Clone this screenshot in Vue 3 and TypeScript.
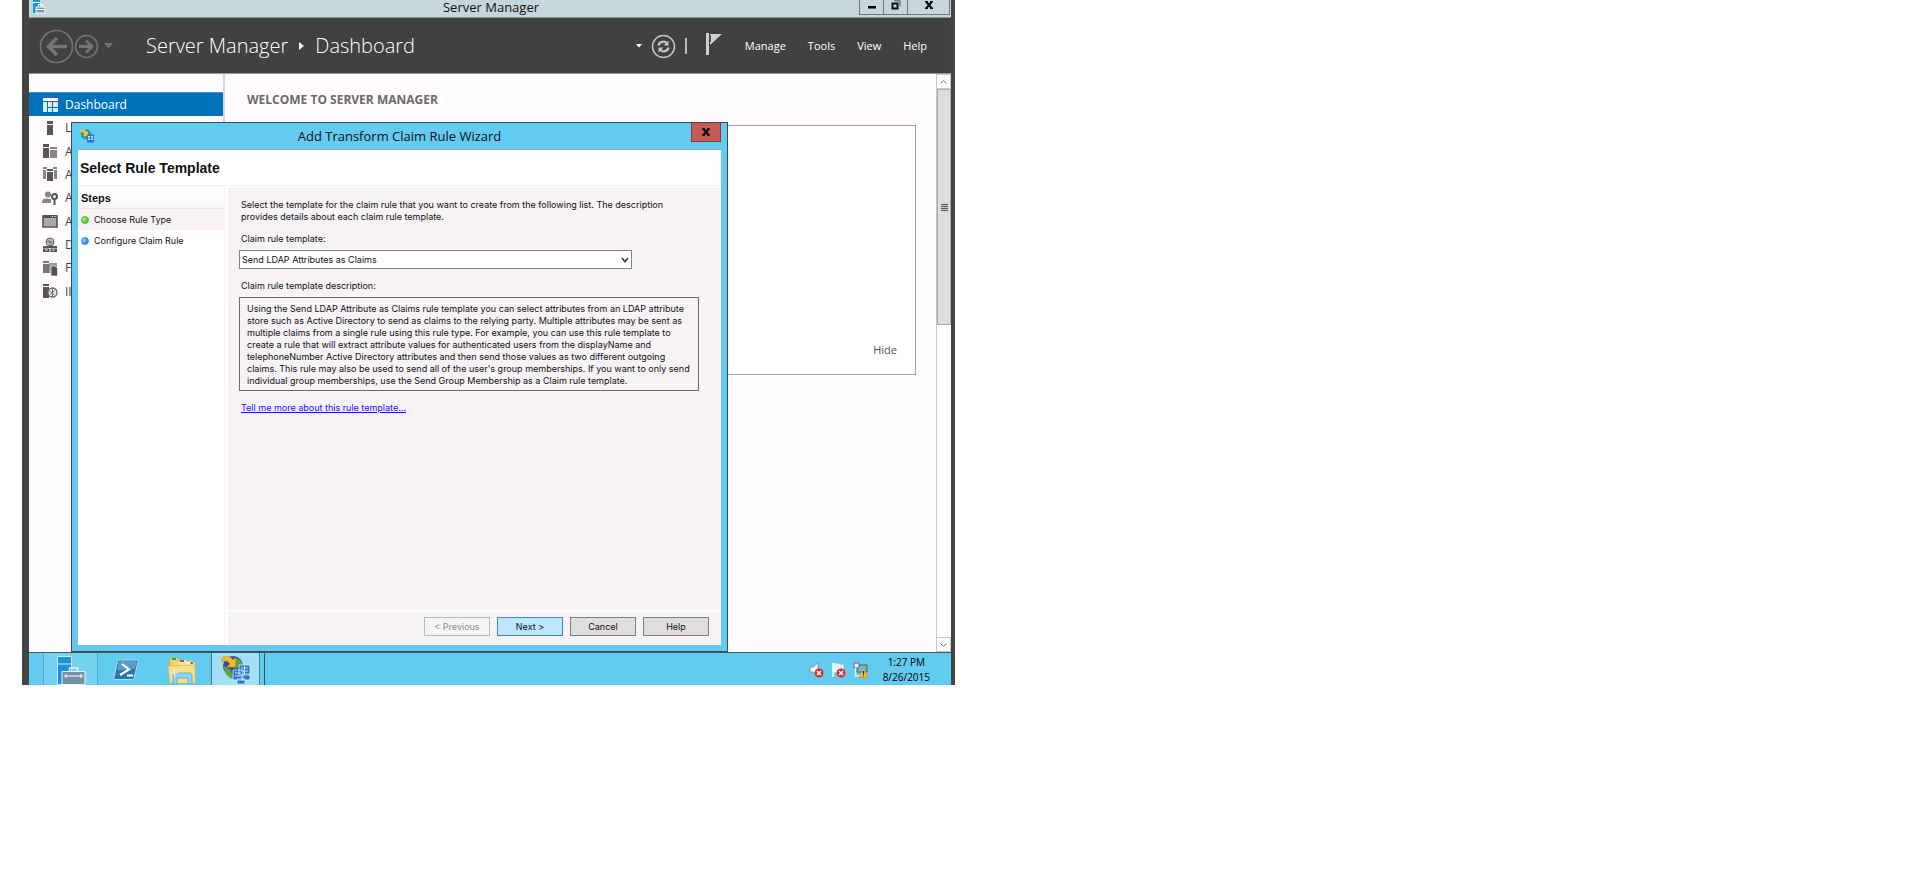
<script setup lang="ts">
import { ref } from 'vue'

interface Template {
  name: string
  description: string[]
}

const menus = ['Manage', 'Tools', 'View', 'Help']

const servers = [
  { icon: 'local', label: 'L' },
  { icon: 'all', label: 'A' },
  { icon: 'ad', label: 'A' },
  { icon: 'key', label: 'A' },
  { icon: 'app', label: 'A' },
  { icon: 'dns', label: 'D' },
  { icon: 'file', label: 'F' },
  { icon: 'iis', label: 'II' },
]

const steps = [
  { label: 'Choose Rule Type', state: 'current' },
  { label: 'Configure Claim Rule', state: 'pending' },
]

const templates: Template[] = [
  {
    name: 'Send LDAP Attributes as Claims',
    description: [
      'Using the Send LDAP Attribute as Claims rule template you can select attributes from an LDAP attribute',
      'store such as Active Directory to send as claims to the relying party. Multiple attributes may be sent as',
      'multiple claims from a single rule using this rule type. For example, you can use this rule template to',
      'create a rule that will extract attribute values for authenticated users from the displayName and',
      'telephoneNumber Active Directory attributes and then send those values as two different outgoing',
      "claims. This rule may also be used to send all of the user's group memberships. If you want to only send",
      'individual group memberships, use the Send Group Membership as a Claim rule template.',
    ],
  },
]

const selected = ref<Template>(templates[0])
</script>

<template>
  <div class="desktop">
    <header class="titlebar">
      <svg class="titlebar-icon" width="14" height="14" viewBox="0 0 14 14">
        <path d="M1 0h7v13H1z" fill="#1e8fdd" />
        <path d="M1 2.5h7" stroke="#fff" />
        <path d="M4 7h9v6H4z" fill="#7d98a8" stroke="#fff" />
        <path d="M6.500 6.500v-2h4v2M4 9.500h9" fill="none" stroke="#fff" />
      </svg>
      <h1>Server Manager</h1>
      <div class="window-buttons">
        <button type="button" aria-label="Minimize">
          <svg width="10" height="10" viewBox="0 0 10 10"><path d="M1 6h8v2.500H1z" /></svg>
        </button>
        <button type="button" aria-label="Restore">
          <svg width="10" height="10" viewBox="0 0 10 10"><path d="M1.500 3.500h5v5h-5z" fill="none" stroke="#111" stroke-width="2" /><path d="M3 .800h6v5.500" fill="none" stroke="#555" /></svg>
        </button>
        <button type="button" class="wide" aria-label="Close">
          <svg width="10" height="10" viewBox="0 0 10 10"><path d="M2 1.500l6 7M8 1.500l-6 7" stroke="#111" stroke-width="2.200" /><path d="M1 1.500h3M6 1.500h3M1 8.500h3M6 8.500h3" stroke="#111" /></svg>
        </button>
      </div>
    </header>

    <nav class="navbar" aria-label="Server Manager">
      <button type="button" class="icon-button" aria-label="Back">
        <svg width="35" height="35" viewBox="0 0 35 35" fill="none" stroke="#747474">
          <circle cx="17.500" cy="17.500" r="16" stroke-width="1.600" />
          <path d="M9 17.500h19M18 9l-8.500 8.500L18 26" stroke-width="3.600" />
        </svg>
      </button>
      <button type="button" class="icon-button" aria-label="Forward">
        <svg width="25" height="25" viewBox="0 0 25 25" fill="none" stroke="#747474">
          <circle cx="12.500" cy="12.500" r="11" stroke-width="1.600" />
          <path d="M5 12.500h13M12 6.500l6 6-6 6" stroke-width="3" />
        </svg>
      </button>
      <button type="button" class="icon-button history" aria-label="History">
        <svg width="9" height="6" viewBox="0 0 9 6"><path d="M0 0h9L4.500 5.500z" fill="#747474" /></svg>
      </button>
      <div class="crumbs">
        <span>Server Manager</span>
        <svg width="5" height="8" viewBox="0 0 5 8"><path d="M0 0l5 4-5 4z" fill="#fff" /></svg>
        <span>Dashboard</span>
      </div>
      <div class="nav-tools">
        <button type="button" class="icon-button" aria-label="More">
          <svg width="6" height="4" viewBox="0 0 6 4"><path d="M0 0h6L3 3.500z" fill="#fff" /></svg>
        </button>
        <button type="button" class="icon-button" aria-label="Refresh">
          <svg width="25" height="25" viewBox="0 0 25 25" fill="none" stroke="#c4c4c4">
            <circle cx="12.500" cy="12.500" r="11" stroke-width="1.500" />
            <path d="M7.500 11.500c.5-4 6.500-5 8.500-2M17.500 13.500c-.5 4-6.500 5-8.500 2" stroke-width="2.200" />
            <path d="M17.500 6.500v5h-5zM7.500 18.500v-5h5z" fill="#c4c4c4" stroke="none" />
          </svg>
        </button>
        <span class="separator"></span>
        <button type="button" class="icon-button flag" aria-label="Notifications">
          <svg width="16" height="22" viewBox="0 0 16 22"><path d="M0 0h3v22H0z" fill="#cfcfcf" /><path d="M4 1h12L4 12z" fill="#cfcfcf" /><path d="M4.500 2v7" stroke="#555" /></svg>
        </button>
      </div>
      <ul class="menus">
        <li v-for="menu in menus" :key="menu"><button type="button">{{ menu }}</button></li>
      </ul>
    </nav>

    <div class="workspace">
      <div class="console">
        <aside class="sidebar">
          <a class="side-current" href="#dashboard">
            <svg width="15" height="14" viewBox="0 0 15 14" fill="#d8ecfa"><path d="M0 0h15v3H0z" fill="#fff" /><path d="M0 4h4v10H0zM5 4h4v5H5zM10 4h5v5h-5zM5 10h4v4H5zM10 10h5v4h-5z" /></svg>
            Dashboard
          </a>
          <ul class="side-list">
            <li v-for="item in servers" :key="item.icon">
              <a :href="'#' + item.icon">
                <svg width="16" height="16" viewBox="0 0 16 16" fill="#555">
                  <template v-if="item.icon === 'local'">
                    <path d="M5 1h6v3H5zM5 5h6v10H5z" />
                  </template>
                  <template v-else-if="item.icon === 'all'">
                    <path d="M1 1h6v3H1zM1 5h6v10H1z" /><path d="M8 4h7v2H8zM8 7h7v8H8z" fill="#858585" />
                  </template>
                  <template v-else-if="item.icon === 'ad'">
                    <path d="M5 3h6v2H5zM5 6h6v9H5z" /><path d="M1 1h4v2H1zM11 1h4v2h-4zM1 4h3v9H1zM12 4h3v9h-3z" fill="#858585" />
                  </template>
                  <template v-else-if="item.icon === 'key'">
                    <circle cx="6" cy="4.500" r="3" fill="#858585" /><path d="M0 13c0-5 3-5 9-4v4z" fill="#858585" />
                    <circle cx="12.500" cy="6.500" r="2.500" fill="none" stroke="#555" stroke-width="2" /><path d="M11.500 8h2v7h-2z" />
                  </template>
                  <template v-else-if="item.icon === 'app'">
                    <path d="M1 3h14v11H1z" fill="#aaa" stroke="#555" stroke-width="1.600" /><path d="M1 2h14v3H1z" /><path d="M10 3.500h1M12.500 3.500h1" stroke="#fff" />
                  </template>
                  <template v-else-if="item.icon === 'dns'">
                    <circle cx="8" cy="5" r="4" fill="#ccc" stroke="#666" /><path d="M4 5h8M8 1v8M5 2.500l6 5" stroke="#777" fill="none" />
                    <path d="M1 9h14v2H1zM1 11.500h6.500V15H1zM8.500 11.500H15V15H8.500z" /><path d="M3 13h3M10 13h3" stroke="#ddd" />
                  </template>
                  <template v-else-if="item.icon === 'file'">
                    <path d="M1 1h6v2H1zM1 4h6v9H1z" fill="#777" /><path d="M7 3h8v10H7z" fill="#999" /><path d="M9 6h4l2.500 2.500V16H9z" stroke="#fff" stroke-width=".600" />
                  </template>
                  <template v-else>
                    <path d="M1 1h6v2H1zM1 4h6v11H1z" /><circle cx="10.500" cy="9.500" r="4.500" fill="#eee" stroke="#666" stroke-width="1.300" /><path d="M7.500 8l5 4M8 11.500l5-4M10.500 6v7" stroke="#777" />
                  </template>
                </svg>
                {{ item.label }}
              </a>
            </li>
          </ul>
        </aside>
        <main class="dashboard">
          <h2>WELCOME TO SERVER MANAGER</h2>
          <section class="welcome"><a href="#hide">Hide</a></section>
        </main>
        <div class="scrollbar">
          <span class="scroll-arrow"><svg width="7" height="4" viewBox="0 0 7 4"><path d="M.5 3.500l3-3 3 3" /></svg></span>
          <span class="scroll-thumb"><i></i></span>
          <span class="scroll-arrow end"><svg width="7" height="4" viewBox="0 0 7 4"><path d="M.5 .500l3 3 3-3" /></svg></span>
        </div>
      </div>

      <section class="dialog" role="dialog" aria-labelledby="dialog-title">
        <header class="dialog-titlebar">
          <svg class="dialog-icon" width="15" height="15" viewBox="0 0 30 30">
            <circle cx="12" cy="11" r="10" fill="#2f7fb8" /><path d="M3 6c6-6 14-3 17 4-6 2-6 7-12 9z" fill="#5fa544" />
            <path d="M1 2c6-3 10 0 12 4l3-2v10H6l3-3C7 6 5 5 1 6z" fill="#f8c630" />
            <path d="M14 11h14v16H14z" fill="#2b78d0" /><path d="M16 14h4v3h-4zM22 14h4v3h-4zM16 19h4v3h-4zM22 19h4v3h-4z" fill="#d6efff" />
          </svg>
          <h2 id="dialog-title">Add Transform Claim Rule Wizard</h2>
          <button type="button" class="dialog-close" aria-label="Close">
            <svg width="10" height="10" viewBox="0 0 10 10"><path d="M2 1.500l6 7M8 1.500l-6 7" stroke="#111" stroke-width="2.200" /><path d="M1 1.500h3M6 1.500h3M1 8.500h3M6 8.500h3" stroke="#111" /></svg>
          </button>
        </header>
        <div class="dialog-client">
          <h3>Select Rule Template</h3>
          <div class="dialog-body">
            <div class="steps">
              <h4>Steps</h4>
              <ol>
                <li v-for="step in steps" :key="step.label" :class="step.state"><span class="dot"></span>{{ step.label }}</li>
              </ol>
            </div>
            <form class="page" @submit.prevent>
              <div class="fields">
                <p class="intro">
                  Select the template for the claim rule that you want to create from the following list. The description<br />
                  provides details about each claim rule template.
                </p>
                <label for="rule-template">Claim rule template:</label>
                <div class="select-box">
                  <select id="rule-template" v-model="selected">
                    <option v-for="t in templates" :key="t.name" :value="t">{{ t.name }}</option>
                  </select>
                  <svg width="8" height="6" viewBox="0 0 8 6"><path d="M1 1l3 3.500L7 1" fill="none" stroke="#444" stroke-width="1.800" /></svg>
                </div>
                <p class="caption">Claim rule template description:</p>
                <div class="description">
                  <div v-for="line in selected.description" :key="line">{{ line }}</div>
                </div>
                <a class="more" href="#more">Tell me more about this rule template...</a>
              </div>
              <div class="actions">
                <button type="button" disabled>&lt; Previous</button>
                <button type="submit" class="primary">Next &gt;</button>
                <button type="button">Cancel</button>
                <button type="button">Help</button>
              </div>
            </form>
          </div>
        </div>
      </section>
    </div>

    <footer class="taskbar">
      <button type="button" class="task open" aria-label="Server Manager">
        <svg width="30" height="29" viewBox="0 0 30 29">
          <path d="M1.500.5h14v28h-14z" fill="#1f8fe0" stroke="#c8ebfb" /><path d="M2 8h13" stroke="#c8ebfb" />
          <path d="M6 15.500h23v13H6z" fill="#7592a5" stroke="#e4f3f9" /><path d="M13.500 15v-3h8v3" fill="none" stroke="#dff1f8" stroke-width="1.500" /><path d="M8 20h19M10 18v4M25 18v4" stroke="#fff" />
        </svg>
      </button>
      <button type="button" class="task" aria-label="PowerShell">
        <svg width="26" height="24" viewBox="0 0 26 24">
          <path d="M6 2h18c1 0 1.500.500 1.200 1.500L21 20c-.3 1-1 1.500-2 1.500H2c-1 0-1.500-.5-1.200-1.500L4.500 3.500C4.800 2.500 5 2 6 2z" fill="#2b74ac" stroke="#b8dcf0" /><path d="M6 3h18l-2 8c-7-1-12 2-18 1z" fill="#5b9ccb" />
          <path d="M9 6l7 5.500L7 17M14 17.500h6" fill="none" stroke="#fff" stroke-width="2.200" />
        </svg>
      </button>
      <button type="button" class="task" aria-label="File Explorer">
        <svg width="30" height="27" viewBox="0 0 30 27">
          <path d="M3 1h8l1 3h15l1 6H3z" fill="#f5d36f" stroke="#d8a93c" stroke-width=".800" /><path d="M12 3h7l1 3h8v5H12z" fill="#fbe59a" /><path d="M5 2h4" stroke="#25a54a" stroke-width="2" /><path d="M13 4h4" stroke="#d8452e" stroke-width="2" /><path d="M20 6h6" stroke="#fff" stroke-width="2.500" /><path d="M23 6h3" stroke="#3a92d4" stroke-width="2" />
          <path d="M1 9l27-1v18H3z" fill="#f8df8c" stroke="#e0b750" stroke-width=".800" />
          <path d="M6 27v-9c0-1 1-2 2-2h15c1 0 2 1 2 2v9h-4v-6H10v6z" fill="#8fd3f0" stroke="#4ea7d3" stroke-width=".800" />
          <path d="M7.500 12v8M3.500 16h8" stroke="#fff" opacity=".8" />
        </svg>
      </button>
      <button type="button" class="task active" aria-label="AD FS Management">
        <svg width="30" height="28" viewBox="0 0 30 28">
          <circle cx="12" cy="10" r="10" fill="#2d4fa3" /><path d="M13 2c5 0 9 4 9 9l-4-1-3 3-5-4zM3 10l7 4 3 9c-5 0-10-6-10-13z" fill="#5aa63a" />
          <path d="M1 2c5-3 9-1 11 2l3-2-1 9H6l3-3C7 5 5 4 1 6z" fill="#f8b82c" stroke="#d68a12" stroke-width=".600" />
          <path d="M18 9h11v10H18zM12 14h10v10H12zM21 18h8v6h-8zM16 23h8v5h-8z" fill="#2b78cc" stroke="#d7f0ff" stroke-width=".800" />
          <path d="M20 12h7M20 15h7M14 17h6M14 20h6M23.500 10v8" stroke="#b9e4ff" />
        </svg>
      </button>
      <span class="group-edge"></span>
      <div class="tray">
        <svg width="15" height="16" viewBox="0 0 15 16"><path d="M1 5h3l5-4v13l-5-4H1z" fill="#f4f4f4" stroke="#7a8a92" stroke-width=".800" /><circle cx="10" cy="11" r="4.500" fill="#d92c2c" /><path d="M8 9l4 4M12 9l-4 4" stroke="#fff" stroke-width="1.500" /></svg>
        <svg width="15" height="16" viewBox="0 0 15 16"><path d="M2 1v14" stroke="#fff" stroke-width="1.600" /><path d="M3 2c4-1 5 2 9 1v7c-4 1-5-1-9 0z" fill="#d9edf5" stroke="#fff" /><circle cx="10" cy="11" r="4.500" fill="#d92c2c" /><path d="M8 9l4 4M12 9l-4 4" stroke="#fff" stroke-width="1.500" /></svg>
        <svg width="15" height="16" viewBox="0 0 15 16"><path d="M4 3h10v7H4z" fill="#6fb9d8" stroke="#4b5f69" /><path d="M1 1h5v5H1z" fill="#e9eff1" stroke="#5a6a72" /><path d="M2.500 6v8h5" fill="none" stroke="#e9eff1" stroke-width="1.500" /><path d="M10.500 6l4.500 9.500H6z" fill="#f9c421" stroke="#c88a10" stroke-width=".600" /><path d="M10.500 9v3.500M10.500 13.500v1" stroke="#222" stroke-width="1.200" /></svg>
      </div>
      <time class="clock" datetime="2015-08-26T13:27"><span>1:27 PM</span><span>8/26/2015</span></time>
    </footer>
  </div>
</template>

<style>
body {
  background: #fff;
}
</style>

<style scoped>
* {
  box-sizing: border-box;
}

h1, h2, h3, h4, p, ul, ol {
  margin: 0;
  padding: 0;
  font-weight: 400;
}

ul, ol {
  list-style: none;
}

button {
  padding: 0;
  border: 0;
  border-radius: 0;
  background: none;
  color: inherit;
  font: inherit;
}

svg {
  display: block;
  flex: none;
}

.desktop {
  display: flex;
  flex-direction: column;
  width: calc(50% - 24px);
  margin-left: 22px;
  padding: 0 4px 0 7px;
  background: #444;
  font-family: "Open Sans", "Noto Sans", sans-serif;
}

.titlebar {
  display: grid;
  grid-template-columns: 91px 1fr 91px;
  align-items: start;
  height: 18px;
  padding: 0 1px 0 3px;
  border-bottom: 1px solid #858c8f;
  background: #c5d6dc;
  color: #111;
}

.titlebar h1 {
  font-size: 13px;
  line-height: 15px;
  text-align: center;
}

.window-buttons {
  display: flex;
  height: 15px;
  border: 1px solid #70787b;
  border-top: 0;
}

.window-buttons button {
  display: grid;
  flex: 24;
  place-items: center;
  padding-bottom: 4px;
  border-right: 1px solid #70787b;
}

.window-buttons .wide {
  flex: 42;
  border-right: 0;
}

.navbar {
  display: flex;
  align-items: center;
  height: 56px;
  padding: 1px 24px 0 10px;
  border-bottom: 1px solid #999;
  background: #414141;
  color: #fff;
}

.icon-button {
  display: grid;
  place-items: center;
}

.history {
  margin-left: 5px;
}

.crumbs {
  display: flex;
  align-items: center;
  gap: 11px;
  margin-left: 33px;
  font-size: 20px;
  font-weight: 300;
  line-height: 28px;
}

.nav-tools {
  display: flex;
  align-items: center;
  gap: 9px;
  margin-left: auto;
}

.separator {
  width: 2px;
  height: 16px;
  background: #bbb;
}

.flag {
  margin: 0 0 4px 10px;
}

.menus {
  display: flex;
  gap: 22px;
  margin-left: 23px;
  font-size: 11px;
  line-height: 16px;
}

.workspace {
  display: grid;
  min-height: 578px;
}

.console,
.dialog {
  grid-area: 1 / 1;
}

.console {
  display: grid;
  grid-template-columns: 196px 1fr 15px;
  background: #fffbff;
}

.sidebar {
  padding-top: 18px;
  border-right: 2px solid #d9d5d9;
  font-size: 12px;
}

.sidebar a {
  display: flex;
  align-items: center;
  gap: 7px;
  padding-left: 13px;
  color: #444;
  text-decoration: none;
}

.sidebar .side-current {
  height: 24px;
  padding-left: 14px;
  border-top: 1px solid #3a93d0;
  background: #0072bc;
  color: #fff;
}

.side-list {
  display: grid;
  grid-auto-rows: 1fr;
  min-height: 187px;
}

.side-list li {
  display: grid;
  align-items: center;
}

.dashboard {
  padding: 18px 20px 0 22px;
}

.dashboard h2 {
  color: #6a6a6a;
  font-size: 12px;
  font-weight: 700;
  line-height: 16px;
}

.welcome {
  display: flex;
  align-items: flex-end;
  justify-content: flex-end;
  min-height: 250px;
  margin-top: 17px;
  padding: 16px 18px;
  border: 1px solid #a3a0a3;
  background: #fff;
}

.welcome a {
  color: #555;
  font-size: 11px;
  line-height: 16px;
  text-decoration: none;
}

.scrollbar {
  display: flex;
  flex-direction: column;
  border-left: 1px solid #c9c6c9;
  background: #fff;
}

.scroll-arrow {
  display: grid;
  place-items: center;
  height: 15px;
  border: 1px solid #c9c6c9;
  border-left: 0;
}

.scroll-arrow path {
  fill: none;
  stroke: #777;
}

.scroll-arrow.end {
  margin-top: auto;
}

.scroll-thumb {
  display: grid;
  place-items: center;
  height: 236px;
  border: 1px solid #ababab;
  background: #ddd;
}

.scroll-thumb i {
  width: 7px;
  height: 7px;
  background: repeating-linear-gradient(#555 0 1px, #ccc 1px 2px);
}

.dialog {
  z-index: 1;
  display: flex;
  flex-direction: column;
  margin: 48px 223px 0 42px;
  padding: 0 6px 6px 6px;
  border: 1px solid #3c4a50;
  background: #63cbef;
  color: #111;
}

.dialog-titlebar {
  display: grid;
  grid-template-columns: 30px 1fr 30px;
  align-items: start;
  height: 27px;
  border-bottom: 1px solid #7ab0c6;
}

.dialog-icon {
  align-self: center;
  margin-left: 2px;
}

.dialog-titlebar h2 {
  font-size: 13px;
  line-height: 26px;
  text-align: center;
}

.dialog-close {
  display: grid;
  place-items: center;
  height: 19px;
  border: 1px solid #8a3c3c;
  border-top: 0;
  background: #c75a54;
}

.dialog-client {
  display: flex;
  flex: 1;
  flex-direction: column;
  background: #fff;
  font-family: Inter, "Liberation Sans", sans-serif;
  font-size: 9px;
  line-height: 12px;
}

.dialog-client h3 {
  height: 36px;
  padding: 8px 2px;
  border-bottom: 1px solid #f0eef0;
  font-family: "Liberation Sans", sans-serif;
  font-size: 14px;
  font-weight: 700;
  line-height: 20px;
}

.dialog-body {
  display: grid;
  flex: 1;
  grid-template-columns: 147px 1fr;
  gap: 3px;
  padding-top: 1px;
}

.steps {
  border-right: 1px solid #f3f1f3;
}

.steps h4 {
  height: 22px;
  padding-left: 3px;
  border-bottom: 1px solid #e8e6e8;
  background: linear-gradient(#fff 50%, #f6f3f6);
  font-family: "Liberation Sans", sans-serif;
  font-size: 11px;
  font-weight: 700;
  line-height: 22px;
}

.steps li {
  display: flex;
  align-items: center;
  gap: 5px;
  height: 21px;
  padding-left: 3px;
}

.steps .current {
  background: #f6f2f6;
}

.dot {
  width: 8px;
  height: 8px;
  border: 1px solid #3a86e8;
  border-radius: 50%;
  background: radial-gradient(circle at 35% 35%, #a5d0ff, #2a86f5 60%);
}

.current .dot {
  border-color: #4fbe2c;
  background: radial-gradient(circle at 35% 35%, #b5f59a, #4cc81e 60%);
}

.page {
  display: flex;
  flex-direction: column;
  background: #f6f2f6;
}

.fields {
  flex: 1;
  padding: 12px 22px 12px 11px;
}

.intro,
.caption,
label {
  display: block;
  padding-left: 2px;
  white-space: nowrap;
}

label {
  margin: 10px 0 5px;
}

.caption {
  margin: 11px 0 5px;
}

.select-box {
  display: grid;
  align-items: center;
  width: 393px;
}

.select-box > * {
  grid-area: 1 / 1;
}

.select-box svg {
  justify-self: end;
  margin-right: 3px;
  pointer-events: none;
}

select {
  width: 100%;
  height: 19px;
  padding: 0 16px 0 2px;
  appearance: none;
  border: 1px solid #858085;
  border-radius: 0;
  background: #fff;
  color: #111;
  font: inherit;
}

.description {
  padding: 5px 7px 3px;
  border: 1px solid #6c696c;
  white-space: nowrap;
}

.more {
  display: inline-block;
  margin: 11px 0 0 2px;
  color: #1414ff;
}

.actions {
  display: flex;
  justify-content: flex-end;
  gap: 7px;
  padding: 5px 12px 9px;
  border-top: 2px solid #fdfcfd;
}

.actions button {
  width: 66px;
  height: 19px;
  border: 1px solid #807c80;
  background: #dedede;
  color: #111;
  line-height: 16px;
}

.actions .primary {
  border-color: #3f87c8;
  background: #bce6ff;
}

.actions button:disabled {
  border-color: #bcb9bc;
  background: #f5f5f5;
  color: #8c8c8c;
}

.taskbar {
  display: flex;
  align-items: stretch;
  height: 33px;
  padding-left: 14px;
  border-top: 1px solid #3d5a66;
  background: #63cbef;
}

.task {
  display: grid;
  place-items: center;
  width: 56px;
  padding-top: 2px;
  overflow: hidden;
}

.task.open {
  width: 55px;
  border: solid #58a9c8;
  border-width: 0 1px;
  background: #76d2f1;
}

.task.active {
  width: 49px;
  margin-left: 1px;
  border: solid #4a7d92;
  border-width: 0 1px;
  background: #a2dff6;
}

.group-edge {
  width: 5px;
  border-right: 1px solid #33515e;
}

.tray {
  display: flex;
  align-items: center;
  gap: 7px;
  margin-left: auto;
  padding-top: 2px;
}

.clock {
  display: flex;
  flex-direction: column;
  justify-content: center;
  margin: 0 21px 0 15px;
  padding-top: 2px;
  font-size: 10px;
  line-height: 15px;
  text-align: center;
}
</style>
